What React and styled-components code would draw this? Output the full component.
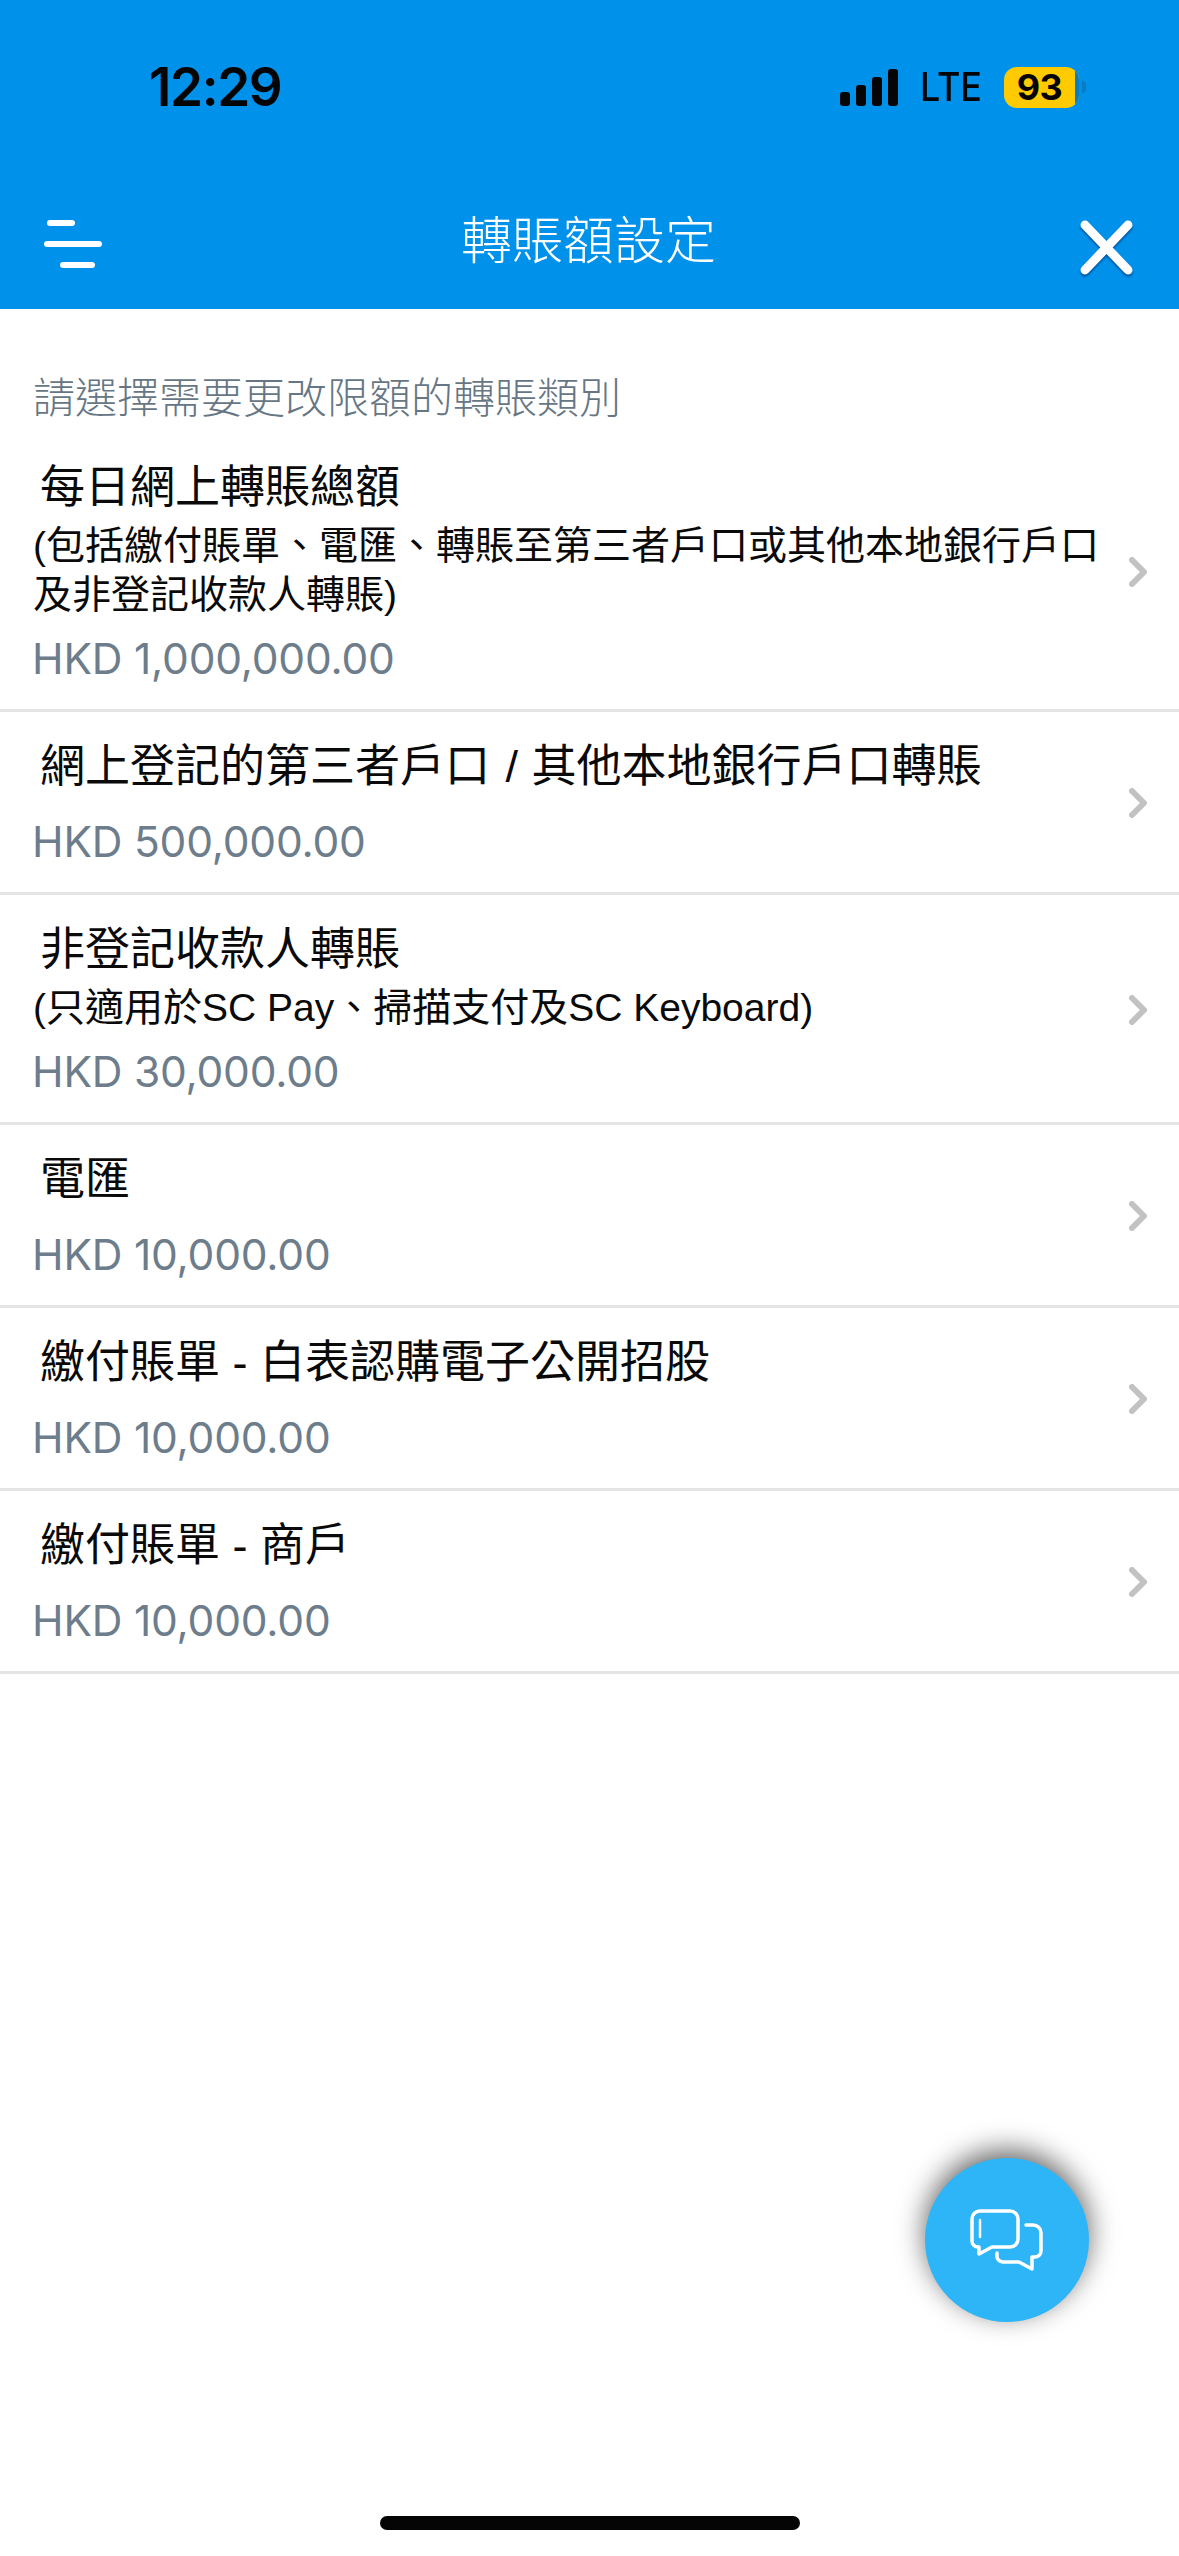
import React from "react";
import styled, { createGlobalStyle } from "styled-components";

const CJK = `"Liberation Sans", "Noto Sans CJK TC", sans-serif`;

const Global = createGlobalStyle`
  html, body { margin: 0; padding: 0; background: #fff; }
  * { box-sizing: border-box; }
`;

const Page = styled.div`
  position: relative;
  width: 1179px;
  height: 2556px;
  overflow: hidden;
  background: #fff;
  font-family: ${CJK};
`;

const Header = styled.header`
  background: #0091ea;
  height: 309px;
  display: flex;
  flex-direction: column;
`;

const StatusBar = styled.div`
  height: 170px;
  display: flex;
  align-items: flex-start;
  justify-content: space-between;
  padding: 59px 93px 0 149px;
`;

const Time = styled.div`
  font-family: Inter, sans-serif;
  font-weight: 600;
  font-size: 53px;
  line-height: 56px;
  letter-spacing: -1.4px;
  color: #050505;
`;

const StatusRight = styled.div`
  display: flex;
  align-items: center;
  height: 40px;
  margin-top: 8px;
`;

const Lte = styled.span`
  font-family: Inter, sans-serif;
  font-weight: 500;
  font-size: 39px;
  line-height: 40px;
  color: #050505;
  margin: 0 24px 0 22px;
  transform: scaleX(0.92);
  transform-origin: left center;
  width: 60px;
  white-space: nowrap;
`;

const Battery = styled.div`
  position: relative;
  width: 75px;
  height: 41px;
  border-radius: 13px;
  overflow: hidden;
  background: #ffcb00;
  display: flex;
  align-items: center;
  justify-content: center;
  padding-right: 4px;
  font-family: Inter, sans-serif;
  font-weight: 700;
  font-size: 36px;
  letter-spacing: -0.5px;
  color: #050505;
  &::after {
    content: "";
    position: absolute;
    top: 0;
    right: 0;
    bottom: 0;
    width: 4px;
    background: #0a7cc4;
  }
`;

const Nub = styled.div`
  width: 0;
  height: 12px;
  margin-left: 3px;
  border-left: 4px solid #0a7cc4;
  border-radius: 0 6px 6px 0;
`;

const Nav = styled.nav`
  flex: 1;
  display: grid;
  grid-template-columns: 1fr auto 1fr;
  align-items: start;
  padding: 0 46px 0 44px;
`;

const NavTitle = styled.h1`
  margin: 32px 0 0;
  font-weight: 300;
  font-size: 51px;
  line-height: 70px;
  color: #fff;
  font-family: "Noto Sans CJK TC", sans-serif;
`;

const Menu = styled.div`
  margin-top: 50px;
  display: flex;
  flex-direction: column;
  gap: 15px;
  width: 58px;
`;

const MenuBar = styled.span`
  display: block;
  height: 6px;
  border-radius: 3px;
  background: #fff;
  width: ${(p) => p.$w}px;
  margin-left: ${(p) => p.$l}px;
`;

const CloseWrap = styled.div`
  justify-self: end;
  margin-top: 50px;
  width: 53px;
  height: 55px;
  filter: drop-shadow(0 2px 1px rgba(0, 30, 90, 0.55));
`;

const Hint = styled.p`
  margin: 64px 0 16px 33px;
  font-size: 42px;
  line-height: 44px;
  font-weight: 300;
  color: #667684;
  font-family: "Noto Sans CJK TC", sans-serif;
`;

const List = styled.ul`
  list-style: none;
  margin: 0;
  padding: 0;
`;

const Row = styled.li`
  display: flex;
  align-items: center;
  justify-content: space-between;
  border-bottom: 3px solid #e4e4e4;
  padding: 27px 32px 25px 33px;
`;

const RowBody = styled.div`
  width: 1075px;
  display: flex;
  flex-direction: column;
`;

const RowTitle = styled.div`
  padding-left: 7px;
  margin-bottom: 5px;
  font-size: 45px;
  line-height: 56px;
  color: #0a0a0a;
`;

const Slash = styled.span`
  padding: 0 1px 0 3px;
`;

const RowNote = styled.div`
  font-size: 39px;
  line-height: 49px;
  color: #0a0a0a;
`;

const Amount = styled.div`
  margin-top: ${(p) => (p.$afterNote ? 15 : 17)}px;
  margin-left: -1px;
  font-family: Inter, "Liberation Sans", sans-serif;
  font-size: 42.5px;
  letter-spacing: -0.2px;
  line-height: 50px;
  color: #6d7d8b;
`;

const Fab = styled.button`
  position: absolute;
  left: 925px;
  top: 2158px;
  width: 164px;
  height: 164px;
  border: 0;
  padding: 0;
  border-radius: 50%;
  background: #2db5f7;
  box-shadow: 0 -8px 28px 0 rgba(0, 0, 0, 0.6);
  display: flex;
  align-items: center;
  justify-content: center;
`;

const HomeBar = styled.div`
  position: absolute;
  left: 380px;
  top: 2516px;
  width: 420px;
  height: 14px;
  border-radius: 7px;
  background: #050505;
`;

const Chevron = () => (
  <svg width="18" height="30" viewBox="0 0 18 30" fill="none">
    <path d="M3 3 L15 15 L3 27" stroke="#c2c2c2" strokeWidth="6" strokeLinecap="round" strokeLinejoin="round" />
  </svg>
);

const Signal = () => (
  <svg width="58" height="37" viewBox="0 0 58 37" fill="#050505">
    <rect x="0" y="23" width="10" height="14" rx="3" />
    <rect x="16" y="16" width="10" height="21" rx="3" />
    <rect x="32" y="8" width="10" height="29" rx="3" />
    <rect x="48" y="0" width="10" height="37" rx="3" />
  </svg>
);

const CloseIcon = () => (
  <svg width="53" height="55" viewBox="0 0 53 55" fill="none">
    <path d="M5 5 L48 50 M48 5 L5 50" stroke="#fff" strokeWidth="9" strokeLinecap="round" />
  </svg>
);

const ChatIcon = () => (
  <svg width="76" height="66" viewBox="0 0 76 66" fill="none" stroke="#fff" strokeWidth="3.5" strokeLinecap="round" strokeLinejoin="round" style={{ marginTop: "2px" }}>
    <path d="M11 3 H41 A8 8 0 0 1 49 11 V31 A8 8 0 0 1 41 39 H23 L10 46 V39 H9 A6 6 0 0 1 3 33 V11 A8 8 0 0 1 11 3 Z" />
    <path d="M11 12 V29" strokeWidth="2.5" />
    <path d="M57 17 H64 A8 8 0 0 1 72 25 V43 A6 6 0 0 1 66 49 H63 V61 L50 54 H34 A6 6 0 0 1 28 47 V45" />
  </svg>
);

const rows = [
  {
    key: "daily",
    title: "每日網上轉賬總額",
    note: "(包括繳付賬單、電匯、轉賬至第三者戶口或其他本地銀行戶口及非登記收款人轉賬)",
    amount: "HKD 1,000,000.00",
  },
  {
    key: "registered",
    title: (
      <>
        網上登記的第三者戶口 <Slash>/</Slash> 其他本地銀行戶口轉賬
      </>
    ),
    amount: "HKD 500,000.00",
  },
  {
    key: "nonreg",
    title: "非登記收款人轉賬",
    note: "(只適用於SC Pay、掃描支付及SC Keyboard)",
    amount: "HKD 30,000.00",
  },
  { key: "tt", title: "電匯", amount: "HKD 10,000.00" },
  { key: "ipo", title: "繳付賬單 - 白表認購電子公開招股", amount: "HKD 10,000.00" },
  { key: "merchant", title: "繳付賬單 - 商戶", amount: "HKD 10,000.00" },
];

export default function App() {
  return (
    <Page>
      <Global />
      <Header>
        <StatusBar>
          <Time>12:29</Time>
          <StatusRight>
            <Signal />
            <Lte>LTE</Lte>
            <Battery>93</Battery>
            <Nub />
          </StatusRight>
        </StatusBar>
        <Nav>
          <Menu>
            <MenuBar $w={28} $l={3} />
            <MenuBar $w={58} $l={0} />
            <MenuBar $w={35} $l={16} />
          </Menu>
          <NavTitle>轉賬額設定</NavTitle>
          <CloseWrap>
            <CloseIcon />
          </CloseWrap>
        </Nav>
      </Header>
      <Hint>請選擇需要更改限額的轉賬類別</Hint>
      <List>
        {rows.map((r) => (
          <Row key={r.key}>
            <RowBody>
              <RowTitle>{r.title}</RowTitle>
              {r.note && <RowNote>{r.note}</RowNote>}
              <Amount $afterNote={Boolean(r.note)}>{r.amount}</Amount>
            </RowBody>
            <Chevron />
          </Row>
        ))}
      </List>
      <Fab aria-label="chat">
        <ChatIcon />
      </Fab>
      <HomeBar />
    </Page>
  );
}
